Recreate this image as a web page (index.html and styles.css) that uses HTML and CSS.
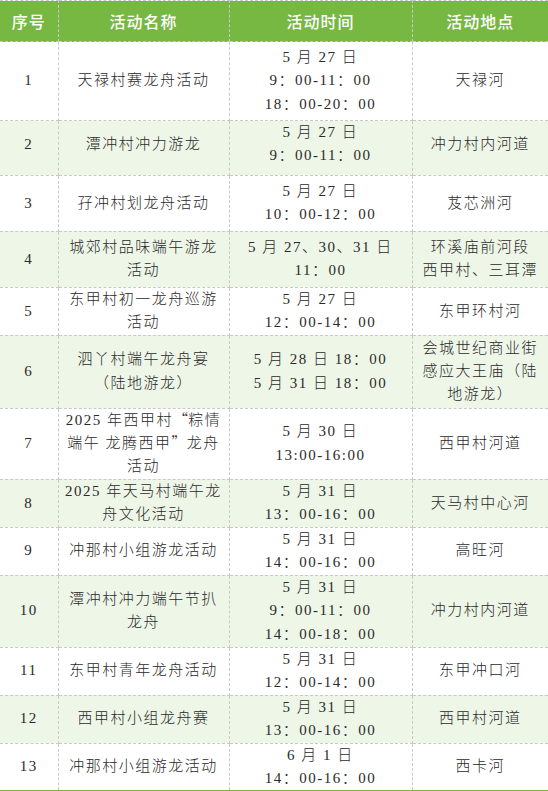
FILE: index.html
```html
<!DOCTYPE html>
<html lang="zh-CN">
<head>
<meta charset="utf-8">
<title>端午活动安排</title>
<link rel="stylesheet" href="styles.css">
</head>
<body>
<table class="sched">
  <colgroup>
    <col class="c-no"><col class="c-name"><col class="c-time"><col class="c-place">
  </colgroup>
  <thead>
    <tr class="head"><th>序号</th><th>活动名称</th><th>活动时间</th><th>活动地点</th></tr>
  </thead>
  <tbody>
    <tr class="h79"><td>1</td><td>天禄村赛龙舟活动</td><td>5 月 27 日<br>9：00-11：00<br>18：00-20：00</td><td>天禄河</td></tr>
    <tr class="alt h54"><td>2</td><td>潭冲村冲力游龙</td><td>5 月 27 日<br>9：00-11：00</td><td>冲力村内河道</td></tr>
    <tr class="h56"><td>3</td><td>孖冲村划龙舟活动</td><td>5 月 27 日<br>10：00-12：00</td><td>芨芯洲河</td></tr>
    <tr class="alt h56"><td>4</td><td>城郊村品味端午游龙<br>活动</td><td>5 月 27、30、31 日<br>11：00</td><td>环溪庙前河段<br>西甲村、三耳潭</td></tr>
    <tr class="h46"><td>5</td><td>东甲村初一龙舟巡游<br>活动</td><td>5 月 27 日<br>12：00-14：00</td><td>东甲环村河</td></tr>
    <tr class="alt h73"><td>6</td><td>泗丫村端午龙舟宴<br>（陆地游龙）</td><td>5 月 28 日 18：00<br>5 月 31 日 18：00</td><td>会城世纪商业街<br>感应大王庙（陆<br>地游龙）</td></tr>
    <tr class="h71"><td>7</td><td>2025 年西甲村<span class="cjk">“</span>粽情<br>端午 龙腾西甲<span class="cjk">”</span>龙舟<br>活动</td><td>5 月 30 日<br>13:00-16:00</td><td>西甲村河道</td></tr>
    <tr class="alt h47"><td>8</td><td>2025 年天马村端午龙<br>舟文化活动</td><td>5 月 31 日<br>13：00-16：00</td><td>天马村中心河</td></tr>
    <tr class="h48"><td>9</td><td>冲那村小组游龙活动</td><td>5 月 31 日<br>14：00-16：00</td><td>高旺河</td></tr>
    <tr class="alt h72"><td>10</td><td>潭冲村冲力端午节扒<br>龙舟</td><td>5 月 31 日<br>9：00-11：00<br>14：00-18：00</td><td>冲力村内河道</td></tr>
    <tr class="h48"><td>11</td><td>东甲村青年龙舟活动</td><td>5 月 31 日<br>12：00-14：00</td><td>东甲冲口河</td></tr>
    <tr class="alt h48"><td>12</td><td>西甲村小组龙舟赛</td><td>5 月 31 日<br>13：00-16：00</td><td>西甲村河道</td></tr>
    <tr class="h48 last"><td>13</td><td>冲那村小组游龙活动</td><td>6 月 1 日<br>14：00-16：00</td><td>西卡河</td></tr>
  </tbody>
</table>
</body>
</html>
```
FILE: styles.css
```css
html, body {
  margin: 0;
  padding: 0;
  background: #ffffff;
}

.sched {
  width: 548px;
  border-collapse: collapse;
  table-layout: fixed;
  font-family: "Liberation Serif", "Noto Sans CJK SC", serif;
  font-size: 15px;
  line-height: 23.4px;
  letter-spacing: 1.5px;
  color: #2a2a2a;
}

.c-no { width: 58px; }
.c-name { width: 171px; }
.c-time { width: 183px; }
.c-place { width: 136px; }

.sched th,
.sched td {
  padding: 0 2px;
  text-align: center;
  vertical-align: middle;
  border: 1px dashed #c9c9c9;
  font-weight: 300;
}

.sched tr > :first-child { border-left: none; }
.sched tr > :last-child { border-right: none; }

.head {
  height: 41px;
  background: #77b843;
}

.head th {
  color: #ffffff;
  font-size: 16px;
  font-weight: 500;
  letter-spacing: 1px;
  line-height: 20px;
  font-family: "Noto Sans CJK SC", sans-serif;
}

.alt { background: #eef6e8; }

.cjk {
  font-family: "Noto Sans CJK SC", sans-serif;
  letter-spacing: 0;
  line-height: 0;
}

.h79 { height: 79px; }
.h73 { height: 73px; }
.h72 { height: 72px; }
.h71 { height: 71px; }
.h56 { height: 56px; }
.h54 { height: 54px; }
.h48 { height: 48px; }
.h47 { height: 47px; }
.h46 { height: 46px; }

.h54 td { padding-bottom: 7px; }

.last td { border-bottom: 2px solid #78b843; }
```
